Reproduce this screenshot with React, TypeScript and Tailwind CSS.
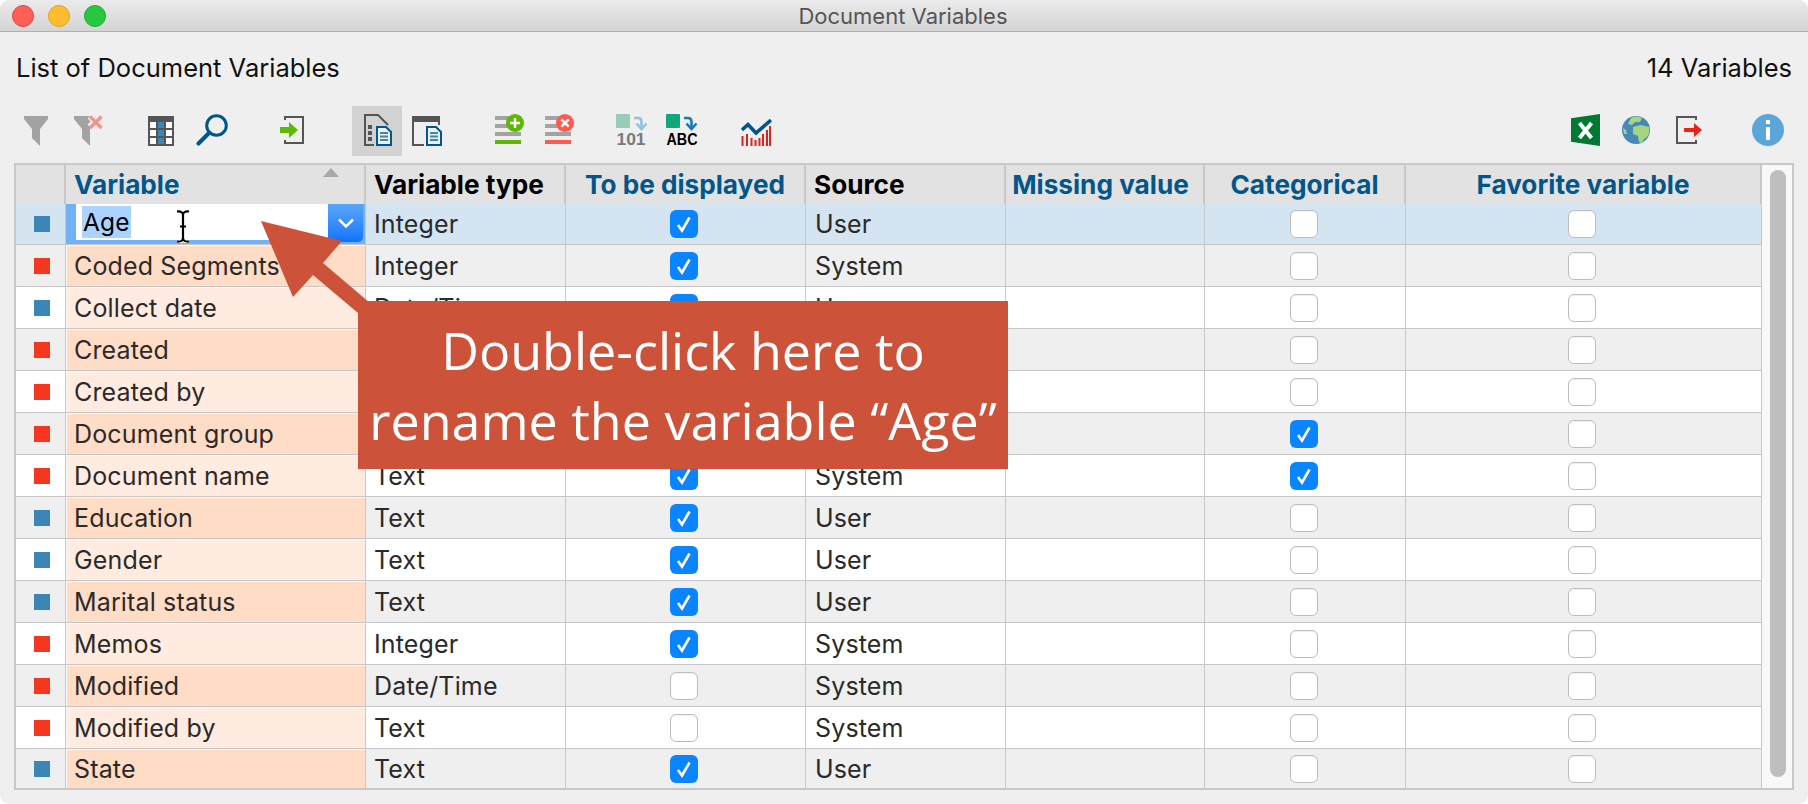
import React from 'react';

type Row = { name: string; type: string; shown: boolean; source: string; cat?: boolean };

const rows: Row[] = [
  { name: 'Age', type: 'Integer', shown: true, source: 'User' },
  { name: 'Coded Segments', type: 'Integer', shown: true, source: 'System' },
  { name: 'Collect date', type: 'Date/Time', shown: true, source: 'User' },
  { name: 'Created', type: 'Date/Time', shown: true, source: 'System' },
  { name: 'Created by', type: 'Text', shown: true, source: 'System' },
  { name: 'Document group', type: 'Text', shown: true, source: 'System', cat: true },
  { name: 'Document name', type: 'Text', shown: true, source: 'System', cat: true },
  { name: 'Education', type: 'Text', shown: true, source: 'User' },
  { name: 'Gender', type: 'Text', shown: true, source: 'User' },
  { name: 'Marital status', type: 'Text', shown: true, source: 'User' },
  { name: 'Memos', type: 'Integer', shown: true, source: 'System' },
  { name: 'Modified', type: 'Date/Time', shown: false, source: 'System' },
  { name: 'Modified by', type: 'Text', shown: false, source: 'System' },
  { name: 'State', type: 'Text', shown: true, source: 'User' },
];

const DARK = '#555555';
const BLUE = '#02568a';
const MID = '#3a87b7';
const GREY = '#a3a3a3';

function Funnel() {
  return (
    <svg width="24" height="30" viewBox="0 0 24 30" className="ml-[24px] mt-[10px] shrink-0">
      <polygon points="0,0 24,0 24,3 16,13 16,30 8,22 8,13 0,3" fill={GREY} />
    </svg>
  );
}

function FunnelOff() {
  return (
    <svg width="29" height="31" viewBox="0 0 29 31" className="ml-[26px] mt-[9px] shrink-0">
      <polygon points="0,1 24,1 24,4 16,14 16,31 8,23 8,14 0,4" fill={GREY} />
      <path d="M16 1 L27 12 M27 1 L16 12" stroke="#efefef" strokeWidth="7" />
      <path d="M16 1.5 L27.5 13 M27.5 1.5 L16 13" stroke="#f2958b" strokeWidth="3.5" />
    </svg>
  );
}

function TableIcon() {
  const xs = [2, 10, 18];
  const ys = [6, 14, 22];
  return (
    <svg width="26" height="30" viewBox="0 0 26 30" className="ml-[45px] mt-[10px] shrink-0">
      <rect width="26" height="30" fill={DARK} />
      {ys.map((y) =>
        xs.map((x) => <rect key={`${x}-${y}`} x={x} y={y} width="6" height="6" fill={x === 10 ? MID : '#ffffff'} />)
      )}
    </svg>
  );
}

function Magnifier() {
  return (
    <svg width="32" height="32" viewBox="0 0 32 32" className="ml-[22px] mt-[8px] shrink-0" fill="none">
      <circle cx="20.5" cy="11.5" r="9.8" stroke={BLUE} strokeWidth="3" />
      <path d="M13 19 L2.5 29.5" stroke={BLUE} strokeWidth="4" strokeLinecap="round" />
    </svg>
  );
}

function ImportIcon() {
  return (
    <svg width="24" height="28" viewBox="0 0 24 28" className="ml-[52px] mt-[10px] shrink-0" fill="none">
      <path d="M5 4 V1 H23 V27 H5 V24" stroke={DARK} strokeWidth="2" />
      <polygon points="0,11 9,11 9,6 18,14 9,22 9,17 0,17" fill="#5cb800" />
    </svg>
  );
}

function SmallDoc({ x, y }: { x: number; y: number }) {
  return (
    <g transform={`translate(${x} ${y})`}>
      <path d="M1 1 H10 L15 6 V19 H1 Z" fill="#efefef" stroke={BLUE} strokeWidth="2" />
      <path d="M4 7 H12 M4 10.5 H12 M4 14 H12" stroke={MID} strokeWidth="2" />
    </g>
  );
}

function DocActive() {
  return (
    <svg width="28" height="32" viewBox="0 0 28 32" fill="none">
      <path d="M10 31 H1 V1 H14 L24 11" stroke={DARK} strokeWidth="2" />
      <rect x="4" y="11" width="4" height="4" fill={DARK} />
      <rect x="4" y="17" width="4" height="4" fill={DARK} />
      <rect x="4" y="23" width="4" height="4" fill={DARK} />
      <SmallDoc x={12} y={12} />
    </svg>
  );
}

function DocWindow() {
  return (
    <svg width="30" height="30" viewBox="0 0 30 30" className="ml-[10px] mt-[10px] shrink-0" fill="none">
      <rect width="28" height="6" fill={DARK} />
      <path d="M1 5 V29 H12" stroke={DARK} strokeWidth="2" />
      <path d="M27 5 V9" stroke={DARK} strokeWidth="2" />
      <SmallDoc x={14} y={10} />
    </svg>
  );
}

function AddRow() {
  return (
    <svg width="29" height="30" viewBox="0 0 29 30" className="ml-[53px] mt-[8px] shrink-0">
      <rect y="2" width="26" height="4" fill={GREY} />
      <rect y="10" width="26" height="4" fill={GREY} />
      <rect y="18" width="26" height="4" fill={GREY} />
      <rect y="26" width="26" height="4" fill="#5cb800" />
      <circle cx="20" cy="9" r="9" fill="#5cb800" />
      <path d="M20 4 V14 M15 9 H25" stroke="#ffffff" strokeWidth="2.4" />
    </svg>
  );
}

function RemoveRow() {
  return (
    <svg width="29" height="30" viewBox="0 0 29 30" className="ml-[21px] mt-[8px] shrink-0">
      <rect y="2" width="26" height="4" fill={GREY} />
      <rect y="10" width="26" height="4" fill={GREY} />
      <rect y="18" width="26" height="4" fill={GREY} />
      <rect y="26" width="26" height="4" fill="#ff5a4d" />
      <circle cx="20" cy="9" r="9" fill="#ff5a4d" />
      <path d="M16.3 5.3 L23.7 12.7 M23.7 5.3 L16.3 12.7" stroke="#ffffff" strokeWidth="2.6" />
    </svg>
  );
}

function Convert({ square, arrow, label, text, w, cls }: { square: string; arrow: string; label: string; text: string; w: number; cls: string }) {
  return (
    <svg width={w} height="31" viewBox={`0 0 ${w} 31`} className={cls} fill="none">
      <rect width="14" height="14" rx="1" fill={square} />
      <path d="M18 4 H22 Q25.5 4 25.5 8 V13" stroke={arrow} strokeWidth="2.6" />
      <path d="M20.5 9.5 L25.5 15 L30.5 9.5" stroke={arrow} strokeWidth="2.6" />
      <text x="0.5" y="30.5" textLength={w - 1} lengthAdjust="spacingAndGlyphs" fontFamily="'Liberation Sans', sans-serif" fontWeight="700" fontSize="16.5" fill={text}>
        {label}
      </text>
    </svg>
  );
}

function ChartIcon() {
  const bars = [
    [1.5, 18],
    [6, 16],
    [10.5, 20],
    [14.5, 22],
    [18.5, 20],
    [22, 16],
    [26, 12],
    [29, 8],
  ];
  return (
    <svg width="31" height="28" viewBox="0 0 31 28" className="ml-[43px] mt-[12px] shrink-0" fill="none">
      {bars.map(([x, y]) => (
        <rect key={x} x={x - 1} y={y} width="2" height={28 - y} fill="#e2231a" />
      ))}
      <path d="M1 12 L7 6.5 L15 15 L30 2" stroke={BLUE} strokeWidth="3.6" />
    </svg>
  );
}

function ExcelIcon() {
  return (
    <svg width="29" height="32" viewBox="0 0 29 32" className="mt-[8px] shrink-0" fill="none">
      <polygon points="0,4.3 29,0 29,32 0,27.7" fill="#007a33" />
      <path d="M8.5 9 L20.5 24 M20.5 9 L8.5 24" stroke="#ffffff" strokeWidth="4" />
    </svg>
  );
}

function GlobeIcon() {
  return (
    <svg width="28" height="28" viewBox="0 0 28 28" className="ml-[22px] mt-[10px] shrink-0">
      <circle cx="14" cy="14" r="14" fill="#4688b8" />
      <path d="M9 2 Q14 -1 20 2 L18 6 L13 6 L10 9 L6 8 Z" fill="#a5d57e" />
      <path d="M11 11 L19 9 L27 11 Q28 17 25 21 L22 23 L20 27 L17 26 L16 20 L11 18 Z" fill="#a5d57e" />
      <path d="M1 12 L4 14 L5 18 L2 18 Z" fill="#a5d57e" />
    </svg>
  );
}

function ExportIcon() {
  return (
    <svg width="26" height="28" viewBox="0 0 26 28" className="ml-[26px] mt-[10px] shrink-0" fill="none">
      <path d="M20 4 V1 H1 V27 H20 V24" stroke={DARK} strokeWidth="2" />
      <polygon points="8,12 18,12 18,7 26,14 18,21 18,16 8,16" fill="#e9231a" />
    </svg>
  );
}

function InfoIcon() {
  return (
    <svg width="32" height="32" viewBox="0 0 32 32" className="ml-[50px] mt-[8px] shrink-0">
      <circle cx="16" cy="16" r="16" fill="#5ba5d8" />
      <rect x="14" y="6" width="4" height="4" fill="#ffffff" />
      <rect x="14" y="13" width="4" height="13" fill="#ffffff" />
    </svg>
  );
}

function Check({ on }: { on: boolean }) {
  if (on) {
    return (
      <div className="flex h-[28px] w-[28px] items-center justify-center rounded-[6px] bg-[#0a84ff]">
        <svg width="28" height="28" viewBox="0 0 28 28" fill="none">
          <path d="M8 15 L12 20.5 L19.5 7.5" stroke="#ffffff" strokeWidth="2.6" />
        </svg>
      </div>
    );
  }
  return <div className="h-[28px] w-[28px] rounded-[6px] border border-[#bdbdbd] bg-white shadow-[inset_0_1px_1px_rgba(0,0,0,0.06)]" />;
}

const head = 'flex h-full shrink-0 items-center border-r-2 border-[#c8c8c8] pt-[1px] text-[26.2px] font-bold';

function CellEditor() {
  return (
    <div className="flex h-full w-[300px] shrink-0 border-r border-[#c8c8c8] bg-[#72b1f5] pl-[10px] pr-[2px] pb-[4px]">
      <div className="flex h-full w-[252px] items-center bg-white pl-[6px]">
        <span className="bg-[#aad4ff] px-[1px] py-[1px] text-[24.5px] leading-[30px] text-black">Age</span>
      </div>
      <div className="flex h-[38px] w-[35px] items-center justify-center rounded-br-[5px] bg-gradient-to-b from-[#5aa5fa] to-[#0a75fb]">
        <svg width="18" height="12" viewBox="0 0 18 12" fill="none">
          <path d="M2 2.5 L9 9.5 L16 2.5" stroke="#ffffff" strokeWidth="2.6" />
        </svg>
      </div>
    </div>
  );
}

function TableRow({ row, index }: { row: Row; index: number }) {
  const selected = index === 0;
  const odd = index % 2 === 1;
  const bg = selected ? 'bg-[#d5e4f1]' : odd ? 'bg-[#efefef]' : 'bg-white';
  const pink = odd ? 'bg-[#ffdcc6]' : 'bg-[#ffebdf]';
  const height = selected ? 'h-[41px]' : index === 13 ? 'h-[39px]' : 'h-[42px]';
  const border = index === 13 ? '' : 'border-b border-[#c6c6c6]';
  const cell = 'flex h-full shrink-0 items-center border-r border-[#c8c8c8]';
  return (
    <div className={`flex ${height} ${border} ${bg} text-[25px] tracking-[0.15px] text-[#2a2a2a]`}>
      <div className={`${cell} w-[50px] justify-center pl-[3px]`}>
        <div className={row.source === 'User' ? 'h-[16px] w-[16px] bg-[#3a87b7]' : 'h-[16px] w-[16px] bg-[#f5371f]'} />
      </div>
      {selected ? (
        <CellEditor />
      ) : (
        <div className={`${cell} w-[300px] border-t border-l border-t-[#f7f7f7] border-l-[#f7f7f7] pl-[7px] pt-[1px] ${pink}`}>{row.name}</div>
      )}
      <div className={`${cell} w-[200px] pl-[8px] pt-[2px]`}>{row.type}</div>
      <div className={`${cell} w-[240px] justify-center pr-[4px]`}>
        <Check on={row.shown} />
      </div>
      <div className={`${cell} w-[200px] pl-[9px] pt-[2px]`}>{row.source}</div>
      <div className={`${cell} w-[199px]`} />
      <div className={`${cell} w-[201px] justify-center pr-[2px]`}>
        <Check on={!!row.cat} />
      </div>
      <div className={`${cell} w-[356px] justify-center pr-[4px]`}>
        <Check on={false} />
      </div>
    </div>
  );
}

export default function App() {
  return (
    <div className="relative h-[804px] w-[1808px] overflow-hidden bg-white [font-family:Inter,sans-serif]">
      <div className="flex h-[804px] flex-col overflow-hidden rounded-[9px] bg-[#efefef]">
        {/* title bar */}
        <div className="relative flex h-[32px] shrink-0 items-center justify-center border-b border-[#b0b0b0] bg-gradient-to-b from-[#ebebeb] to-[#d4d4d4] pt-[1px] pr-[2px]">
          <div className="absolute left-[12px] top-[5px] flex gap-[14px]">
            <div className="h-[22px] w-[22px] rounded-full border border-[#e0443e] bg-[#ff5f57]" />
            <div className="h-[22px] w-[22px] rounded-full border border-[#dea123] bg-[#ffbd2e]" />
            <div className="h-[22px] w-[22px] rounded-full border border-[#1aab29] bg-[#28c940]" />
          </div>
          <span className="text-[22px] text-[#555555]">Document Variables</span>
        </div>

        <div className="flex items-center justify-between pl-[16px] pr-[16px] pt-[18px] pb-[20px] text-[25.5px] leading-[36px] text-[#111111]">
          <span>List of Document Variables</span>
          <span>14 Variables</span>
        </div>

        {/* toolbar */}
        <div className="flex h-[50px] shrink-0 items-start">
          <Funnel />
          <FunnelOff />
          <TableIcon />
          <Magnifier />
          <ImportIcon />
          <div className="ml-[48px] flex h-[50px] w-[50px] shrink-0 items-start bg-[#d2d2d2] pl-[12px] pt-[8px]">
            <DocActive />
          </div>
          <DocWindow />
          <AddRow />
          <RemoveRow />
          <Convert square="#96ccb8" arrow="#93bfe0" label="101" text="#7a7a7a" w={30} cls="ml-[42px] mt-[8px] shrink-0 overflow-visible" />
          <Convert square="#0da87c" arrow="#1c78b8" label="ABC" text="#000000" w={32} cls="ml-[20px] mt-[8px] shrink-0 overflow-visible" />
          <ChartIcon />
          <div className="ml-auto flex items-start pr-[24px]">
            <ExcelIcon />
            <GlobeIcon />
            <ExportIcon />
            <InfoIcon />
          </div>
        </div>

        {/* table */}
        <div className="mx-[14px] mt-[7px] flex w-[1780px] shrink-0 border-2 border-[#c8c8c8]">
          <div className="w-[1746px] shrink-0">
            <div className="flex h-[39px] bg-[#e2e2e2]">
              <div className={`${head} w-[50px]`} />
              <div className={`${head} relative w-[300px] pl-[8px] text-[#02568a]`}>
                Variable
                <div className="absolute left-[257px] top-[3px] h-0 w-0 border-x-[8px] border-b-[9px] border-x-transparent border-b-[#a8a8a8]" />
              </div>
              <div className={`${head} w-[200px] pl-[8px] text-black`}>Variable type</div>
              <div className={`${head} w-[240px] justify-center text-[#02568a]`}>To be displayed</div>
              <div className={`${head} w-[200px] pl-[8px] text-black`}>Source</div>
              <div className={`${head} w-[199px] justify-center pr-[8px] text-[#02568a]`}>Missing value</div>
              <div className={`${head} w-[201px] justify-center text-[#02568a]`}>Categorical</div>
              <div className={`${head} w-[356px] justify-center text-[#02568a]`}>Favorite variable</div>
            </div>
            {rows.map((row, i) => (
              <TableRow key={row.name} row={row} index={i} />
            ))}
          </div>
          {/* scroll bar */}
          <div className="w-[30px] shrink-0 bg-[#f8f8f8] pl-[8px] pt-[5px]">
            <div className="h-[607px] w-[16px] rounded-full bg-[#bebebe]" />
          </div>
        </div>
      </div>

      {/* text cursor over the cell editor */}
      <svg width="16" height="33" viewBox="0 0 16 33" className="absolute left-[175px] top-[210px]" fill="none">
        <path d="M2 1.5 Q8 1 8 5 V28 Q8 32 2 31.5 M14 1.5 Q8 1 8 5 M8 28 Q8 32 14 31.5 M5 16.5 H11" stroke="#ffffff" strokeWidth="4" />
        <path d="M2 1.5 Q8 1 8 5 V28 Q8 32 2 31.5 M14 1.5 Q8 1 8 5 M8 28 Q8 32 14 31.5 M5 16.5 H11" stroke="#000000" strokeWidth="2.2" />
      </svg>

      {/* callout arrow */}
      <svg width="120" height="100" viewBox="0 0 120 100" className="absolute left-[255px] top-[215px]">
        <polygon points="6,6 87,26 68,48 115,88 115,98 103,98 58,60 38,82" fill="#cc533a" />
      </svg>
      <div className="absolute left-[358px] top-[301px] flex h-[168px] w-[650px] flex-col items-center justify-center bg-[#cc533a] text-[52px] font-normal leading-[70px] text-white [font-family:'Open_Sans',sans-serif]">
        <div>Double-click here to</div>
        <div>rename the variable “Age”</div>
      </div>
    </div>
  );
}
